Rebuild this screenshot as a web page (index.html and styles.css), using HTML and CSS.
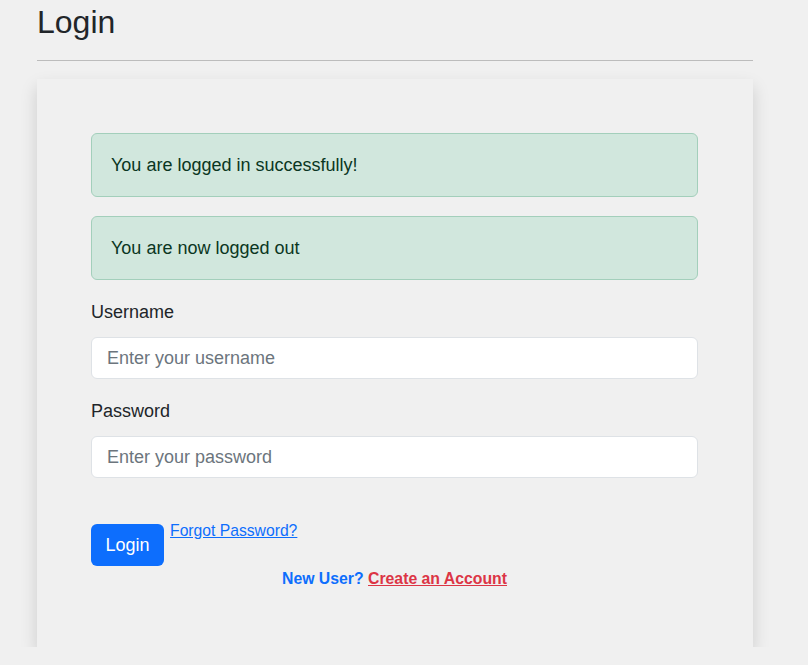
FILE: index.html
```html
<!DOCTYPE html>
<html lang="en">
<head>
<meta charset="utf-8">
<title>Login</title>
<link rel="stylesheet" href="styles.css">
</head>
<body>
<main class="page">
  <h1 class="page-title">Login</h1>
  <hr class="divider">
  <section class="card">
    <div class="alert">You are logged in successfully!</div>
    <div class="alert">You are now logged out</div>
    <form class="form">
      <label class="form-label" for="username">Username</label>
      <input class="form-control" id="username" type="text" placeholder="Enter your username">
      <label class="form-label" for="password">Password</label>
      <input class="form-control" id="password" type="password" placeholder="Enter your password">
      <div class="actions">
        <button class="btn" type="button">Login</button>
        <a class="link-forgot" href="#">Forgot Password?</a>
      </div>
      <p class="signup"><span class="signup-q">New User?</span> <a class="signup-link" href="#">Create an Account</a></p>
    </form>
  </section>
</main>
</body>
</html>
```
FILE: styles.css
```css
* { box-sizing: border-box; }
html, body { margin: 0; padding: 0; }
body {
  background: #f0f0f0;
  font-family: "Liberation Sans", Arial, sans-serif;
  font-size: 18px;
  line-height: 26px;
  color: #212529;
}
.page {
  width: 716px;
  margin-left: 37px;
}
.page-title {
  margin: 0;
  padding-top: 3px;
  font-size: 32px;
  font-weight: 400;
  line-height: 38px;
}
.divider {
  margin: 19px 0 0;
  border: 0;
  border-top: 1px solid #bcbcbc;
}
.card {
  margin-top: 18px;
  background: #f0f0f0;
  padding: 54px 55px 55px 54px;
  box-shadow: 0 8px 16px rgba(0, 0, 0, 0.15);
}
.alert {
  background: #d1e7dd;
  border: 1px solid #a3cfbb;
  color: #0a3622;
  border-radius: 6px;
  padding: 18px 19px;
  line-height: 26px;
  margin-bottom: 19px;
}
.form { display: flex; flex-direction: column; }
.form-label {
  line-height: 26px;
  margin-bottom: 12px;
}
.form-control {
  font: inherit;
  line-height: 26px;
  height: 42px;
  padding: 7px 15px;
  border: 1px solid #dee2e6;
  border-radius: 6px;
  background: #fff;
  color: #212529;
  margin-bottom: 19px;
}
.form-control::placeholder { color: #6c757d; }
.actions {
  display: flex;
  align-items: flex-start;
  gap: 6px;
  margin-top: 27px;
}
.btn {
  font: inherit;
  font-size: 18px;
  line-height: 26px;
  height: 42px;
  padding: 8px 14.5px;
  color: #fff;
  background: #0d6efd;
  border: 0;
  border-radius: 6px;
}
.link-forgot {
  color: #0d6efd;
  font-size: 15.7px;
  line-height: 14px;
  text-decoration: underline;
}
.signup {
  margin: 0;
  text-align: center;
  font-size: 15.8px;
  font-weight: 700;
  line-height: 26px;
}
.signup-q { color: #0d6efd; }
.signup-link { color: #dc3545; text-decoration: underline; }
```
